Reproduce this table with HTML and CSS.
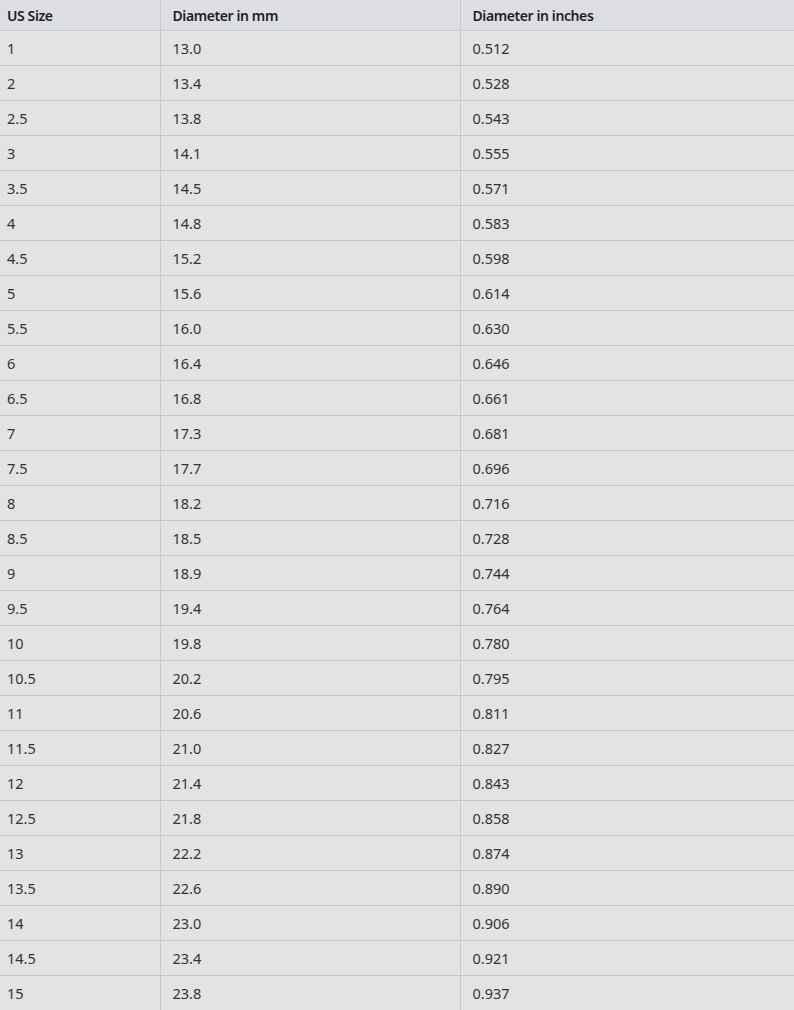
FILE: index.html
```html
<!DOCTYPE html>
<html>
<head>
<meta charset="utf-8">
<link rel="stylesheet" href="styles.css">
</head>
<body>
<table class="size-table">
  <colgroup>
    <col class="c1"><col class="c2"><col class="c3">
  </colgroup>
  <thead>
    <tr><th>US Size</th><th>Diameter in mm</th><th>Diameter in inches</th></tr>
  </thead>
  <tbody>
    <tr><td>1</td><td>13.0</td><td>0.512</td></tr>
    <tr><td>2</td><td>13.4</td><td>0.528</td></tr>
    <tr><td>2.5</td><td>13.8</td><td>0.543</td></tr>
    <tr><td>3</td><td>14.1</td><td>0.555</td></tr>
    <tr><td>3.5</td><td>14.5</td><td>0.571</td></tr>
    <tr><td>4</td><td>14.8</td><td>0.583</td></tr>
    <tr><td>4.5</td><td>15.2</td><td>0.598</td></tr>
    <tr><td>5</td><td>15.6</td><td>0.614</td></tr>
    <tr><td>5.5</td><td>16.0</td><td>0.630</td></tr>
    <tr><td>6</td><td>16.4</td><td>0.646</td></tr>
    <tr><td>6.5</td><td>16.8</td><td>0.661</td></tr>
    <tr><td>7</td><td>17.3</td><td>0.681</td></tr>
    <tr><td>7.5</td><td>17.7</td><td>0.696</td></tr>
    <tr><td>8</td><td>18.2</td><td>0.716</td></tr>
    <tr><td>8.5</td><td>18.5</td><td>0.728</td></tr>
    <tr><td>9</td><td>18.9</td><td>0.744</td></tr>
    <tr><td>9.5</td><td>19.4</td><td>0.764</td></tr>
    <tr><td>10</td><td>19.8</td><td>0.780</td></tr>
    <tr><td>10.5</td><td>20.2</td><td>0.795</td></tr>
    <tr><td>11</td><td>20.6</td><td>0.811</td></tr>
    <tr><td>11.5</td><td>21.0</td><td>0.827</td></tr>
    <tr><td>12</td><td>21.4</td><td>0.843</td></tr>
    <tr><td>12.5</td><td>21.8</td><td>0.858</td></tr>
    <tr><td>13</td><td>22.2</td><td>0.874</td></tr>
    <tr><td>13.5</td><td>22.6</td><td>0.890</td></tr>
    <tr><td>14</td><td>23.0</td><td>0.906</td></tr>
    <tr><td>14.5</td><td>23.4</td><td>0.921</td></tr>
    <tr><td>15</td><td>23.8</td><td>0.937</td></tr>
  </tbody>
</table>
</body>
</html>
```
FILE: styles.css
```css
html, body {
  margin: 0;
  padding: 0;
  background: #e3e3e3;
}
.size-table {
  border-collapse: collapse;
  table-layout: fixed;
  width: 794px;
  font-family: "Noto Sans", "Open Sans", sans-serif;
  font-size: 14.5px;
  color: #333333;
}
.c1 { width: 160px; }
.c2 { width: 300px; }
.c3 { width: 334px; }
.size-table th,
.size-table td {
  text-align: left;
  padding: 0 12px;
  border-left: 1px solid #c6c7cf;
  border-bottom: 1px solid #c6c7cf;
  white-space: nowrap;
}
.size-table th:first-child,
.size-table td:first-child {
  border-left: none;
  padding-left: 7px;
}
.size-table th {
  height: 30px;
  background: #dddee3;
  font-size: 14px;
  font-weight: 600;
  letter-spacing: -0.4px;
  color: #1f1f1f;
}
.size-table td {
  height: 34px;
  background: #e3e3e3;
}
```
